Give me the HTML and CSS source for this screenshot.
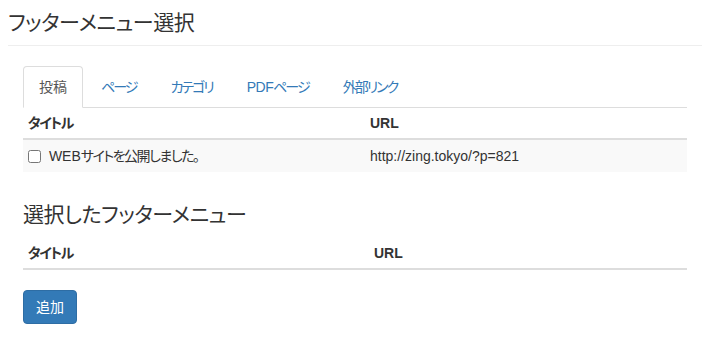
FILE: index.html
```html
<!DOCTYPE html>
<html lang="ja">
<head>
    <meta charset="UTF-8">
    <meta name="viewport" content="width=device-width, initial-scale=1.0">
    <title>フッターメニュー選択</title>
    <link rel="stylesheet" href="styles.css">
</head>
<body>
<div class="page-header">
    <h1>フッターメニュー選択</h1>
</div>
<div class="content">
    <ul class="nav-tabs">
        <li class="active"><a href="#">投稿</a></li>
        <li><a href="#">ページ</a></li>
        <li><a href="#">カテゴリ</a></li>
        <li><a href="#"><span class="latin">PDF</span>ページ</a></li>
        <li><a href="#">外部リンク</a></li>
    </ul>
    <table class="menu-table">
        <tr><th class="col-title"><span class="kana">タイトル</span></th><th>URL</th></tr>
        <tr class="striped">
            <td><label><input type="checkbox"> WEB<span class="kana">サイトを公開しました。</span></label></td>
            <td>http://zing.tokyo/?p=821</td>
        </tr>
    </table>

    <h2>選択したフッターメニュー</h2>
    <table class="menu-table selected">
        <tr><th class="col-title"><span class="kana">タイトル</span></th><th>URL</th></tr>
    </table>

    <button class="btn-primary">追加</button>
</div>
</body>
</html>
```

FILE: styles.css
```css
body {
    font-family: "Liberation Sans", Arial, "Noto Sans CJK JP", sans-serif;
    font-size: 14px;
    font-feature-settings: "palt";
    color: #333;
    background-color: #fff;
    margin: 0;
    padding: 0;
}
.page-header {
    margin: 0 2px 0 8px;
    padding: 9px 0 8px;
    border-bottom: 1px solid #eee;
}
.page-header h1 {
    margin: 0;
    font-size: 21px;
    line-height: 28px;
    font-weight: normal;
    letter-spacing: -0.4px;
    color: #333;
}
.content {
    padding: 20px 17px 0 23px;
}
.nav-tabs {
    list-style: none;
    margin: 0;
    padding: 0;
    display: flex;
    border-bottom: 1px solid #ddd;
}
.nav-tabs li {
    margin-right: 2px;
    margin-bottom: -1px;
}
.nav-tabs a {
    display: block;
    padding: 10px 15px;
    line-height: 20px;
    border: 1px solid transparent;
    border-radius: 4px 4px 0 0;
    color: #337ab7;
    text-decoration: none;
    letter-spacing: -2px;
}
.nav-tabs .latin {
    letter-spacing: -0.5px;
}
.nav-tabs li.active a {
    color: #555;
    background-color: #fff;
    border-color: #ddd #ddd transparent;
    letter-spacing: 0;
}
.menu-table {
    width: 100%;
    border-collapse: collapse;
}
.menu-table th {
    text-align: left;
    padding: 5px;
    line-height: 20px;
    font-weight: bold;
    border-bottom: 2px solid #ddd;
}
.menu-table td {
    padding: 5px;
    line-height: 22px;
    vertical-align: top;
}
.menu-table .col-title {
    width: 332px;
}
.menu-table.selected th {
    padding-top: 4px;
}
.menu-table.selected .col-title {
    width: 336px;
}
.kana {
    letter-spacing: -1.5px;
}
.striped td {
    background-color: #f9f9f9;
}
label input {
    margin: 0 4px 0 0;
    vertical-align: -2px;
}
h2 {
    font-size: 21px;
    line-height: 28px;
    font-weight: normal;
    letter-spacing: -0.4px;
    margin: 29px 0 10px;
}
.btn-primary {
    margin-top: 20px;
    padding: 6px 12px;
    font-family: inherit;
    font-size: 14px;
    line-height: 20px;
    color: #fff;
    background-color: #337ab7;
    border: 1px solid #2e6da4;
    border-radius: 4px;
    cursor: pointer;
}
```
